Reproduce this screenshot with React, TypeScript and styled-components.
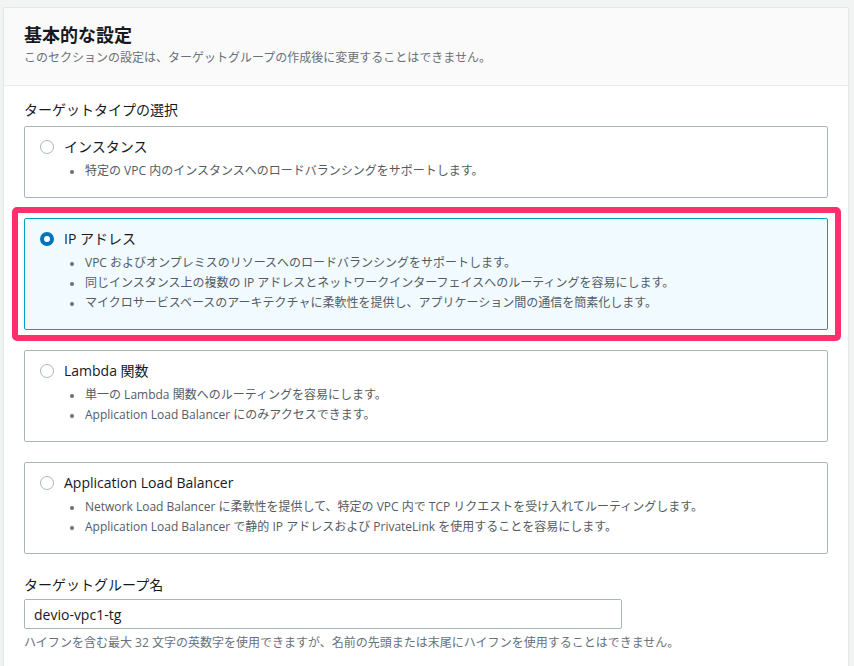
import React from "react";
import styled, { createGlobalStyle } from "styled-components";

const GlobalStyle = createGlobalStyle`
  html, body {
    margin: 0;
    padding: 0;
    background: #f2f3f3;
  }
  body {
    font-family: "Open Sans", "Noto Sans CJK JP", sans-serif;
    color: #16191f;
    -webkit-font-smoothing: antialiased;
  }
  * { box-sizing: border-box; }
`;

const Page = styled.div`
  padding: 7px 5px 0 3px;
  height: 666px;
  overflow: hidden;
`;

const Card = styled.section`
  background: #ffffff;
  border: 1px solid #e4e8e8;
  box-shadow: 0 1px 1px 0 rgba(0, 28, 36, 0.12);
  border-radius: 1px;
`;

const CardHeader = styled.header`
  background: #fafafa;
  border-bottom: 1px solid #eaeded;
  padding: 16px 20px 19px 20px;
`;

const Title = styled.h2`
  margin: 0;
  font-size: 18px;
  line-height: 22px;
  font-weight: 700;
  color: #16191f;
`;

const Subtitle = styled.p`
  margin: 4px 0 0 0;
  font-size: 12px;
  line-height: 16px;
  color: #687078;
`;

const CardBody = styled.div`
  padding: 14px 20px 40px 20px;
`;

const FieldLabel = styled.div`
  font-size: 14px;
  line-height: 20px;
  color: #16191f;
`;

const OptionList = styled.div`
  display: flex;
  flex-direction: column;
  gap: 20px;
  margin-top: 6px;
`;

const Highlight = styled.div`
  margin: -11px -13px -11px -12px;
  border: 6px solid #ff2e6c;
  border-radius: 5px;
  padding: 5px 7px 5px 6px;
  background: #ffffff;
`;

const OptionBox = styled.label<{ $selected?: boolean }>`
  display: block;
  border: 1px solid ${(p) => (p.$selected ? "#00a1c9" : "#aab7b8")};
  background: ${(p) => (p.$selected ? "#f1faff" : "#ffffff")};
  border-radius: 2px;
  padding: 10px 20px 16px 15px;
  cursor: pointer;
`;

const OptionHead = styled.div`
  display: flex;
  align-items: center;
  gap: 10px;
  height: 20px;
`;

const Radio = styled.span<{ $checked?: boolean }>`
  width: 14px;
  height: 14px;
  border-radius: 50%;
  flex: 0 0 auto;
  background: #ffffff;
  border: ${(p) => (p.$checked ? "4px solid #0073bb" : "1.5px solid #aab7b8")};
`;

const OptionTitle = styled.span`
  font-size: 14px;
  line-height: 20px;
  color: #16191f;
`;

const Bullets = styled.ul`
  margin: 4px 0 0 0;
  padding: 0 0 0 44px;
  list-style: disc;
  color: #545b64;
`;

const Bullet = styled.li`
  font-size: 12px;
  line-height: 20px;
  color: #545b64;
  padding-left: 1px;
  &::marker {
    font-size: 10px;
    color: #687078;
  }
`;

const NameLabel = styled(FieldLabel)`
  margin-top: 21px;
`;

const TextInput = styled.input`
  display: block;
  margin-top: 4px;
  width: 598px;
  height: 30px;
  border: 1px solid #aab7b8;
  border-radius: 2px;
  padding: 0 9px;
  font-family: "Open Sans", "Noto Sans CJK JP", sans-serif;
  font-size: 14px;
  color: #16191f;
  background: #ffffff;
  outline: none;
`;

const HelpText = styled.div`
  margin-top: 5px;
  font-size: 12px;
  line-height: 18px;
  color: #687078;
`;

type Option = {
  key: string;
  title: string;
  bullets: string[];
};

const options: Option[] = [
  {
    key: "instance",
    title: "インスタンス",
    bullets: ["特定の VPC 内のインスタンスへのロードバランシングをサポートします。"],
  },
  {
    key: "ip",
    title: "IP アドレス",
    bullets: [
      "VPC およびオンプレミスのリソースへのロードバランシングをサポートします。",
      "同じインスタンス上の複数の IP アドレスとネットワークインターフェイスへのルーティングを容易にします。",
      "マイクロサービスベースのアーキテクチャに柔軟性を提供し、アプリケーション間の通信を簡素化します。",
    ],
  },
  {
    key: "lambda",
    title: "Lambda 関数",
    bullets: [
      "単一の Lambda 関数へのルーティングを容易にします。",
      "Application Load Balancer にのみアクセスできます。",
    ],
  },
  {
    key: "alb",
    title: "Application Load Balancer",
    bullets: [
      "Network Load Balancer に柔軟性を提供して、特定の VPC 内で TCP リクエストを受け入れてルーティングします。",
      "Application Load Balancer で静的 IP アドレスおよび PrivateLink を使用することを容易にします。",
    ],
  },
];

const selectedKey = "ip";

function OptionCard({ option }: { option: Option }) {
  const selected = option.key === selectedKey;
  return (
    <OptionBox $selected={selected}>
      <OptionHead>
        <Radio $checked={selected} />
        <OptionTitle>{option.title}</OptionTitle>
      </OptionHead>
      <Bullets>
        {option.bullets.map((b) => (
          <Bullet key={b}>{b}</Bullet>
        ))}
      </Bullets>
    </OptionBox>
  );
}

export default function App() {
  return (
    <>
      <GlobalStyle />
      <Page>
        <Card>
          <CardHeader>
            <Title>基本的な設定</Title>
            <Subtitle>
              このセクションの設定は、ターゲットグループの作成後に変更することはできません。
            </Subtitle>
          </CardHeader>
          <CardBody>
            <FieldLabel>ターゲットタイプの選択</FieldLabel>
            <OptionList>
              {options.map((o) =>
                o.key === selectedKey ? (
                  <Highlight key={o.key}>
                    <OptionCard option={o} />
                  </Highlight>
                ) : (
                  <OptionCard key={o.key} option={o} />
                )
              )}
            </OptionList>
            <NameLabel>ターゲットグループ名</NameLabel>
            <TextInput defaultValue="devio-vpc1-tg" />
            <HelpText>
              ハイフンを含む最大 32 文字の英数字を使用できますが、名前の先頭または末尾にハイフンを使用することはできません。
            </HelpText>
          </CardBody>
        </Card>
      </Page>
    </>
  );
}
